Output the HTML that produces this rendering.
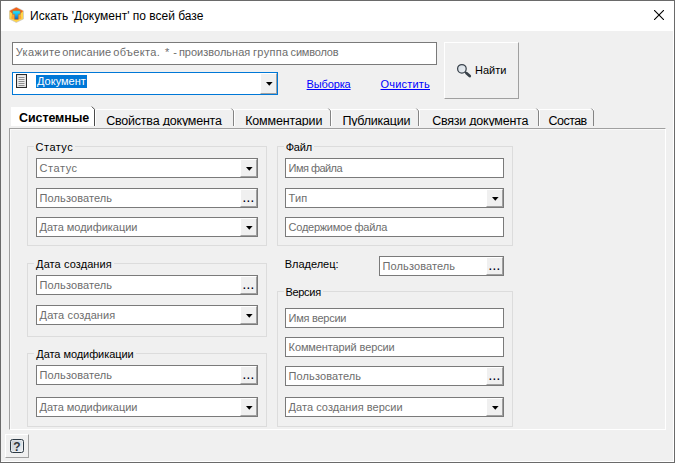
<!DOCTYPE html>
<html lang="ru">
<head>
<meta charset="utf-8">
<title>Искать 'Документ' по всей базе</title>
<style>
html,body{margin:0;padding:0;}
body{width:675px;height:463px;overflow:hidden;background:#f0f0f0;font-family:"Liberation Sans",sans-serif;font-size:11px;color:#000;position:relative;}
.abs{position:absolute;box-sizing:border-box;}
#win{left:0;top:0;width:675px;height:463px;border:1px solid #6a6a6a;background:#f0f0f0;box-shadow:inset -1px -1px 0 #fff;}
#title{left:1px;top:1px;width:673px;height:30px;background:#fff;}
#ttext{left:30px;top:9px;font-size:12px;line-height:14px;white-space:pre;}
.field{background:#fff;border:1px solid #7a7a7a;height:20px;}
.ft{line-height:14px;color:#6d6d6d;white-space:pre;}
.btn{width:17px;height:18px;background:#f0f0f0;border:1px solid;border-color:#fff #a0a0a0 #a0a0a0 #fff;}
.dots{font-size:15px;line-height:10px;white-space:pre;color:#00001a;letter-spacing:-0.17px;}
.grp{border:1px solid #dcdcdc;}
.glab{background:#f0f0f0;line-height:13px;white-space:pre;}
.tab{top:109px;height:17px;border-top:1px solid #fff;border-left:1px solid #fff;overflow:hidden;}
.tt{font-size:12.5px;line-height:14px;white-space:pre;}
a{color:#0000ff;text-decoration:underline;text-decoration-skip-ink:none;}
</style>
</head>
<body>
<div id="win" class="abs"></div>
<div id="title" class="abs"></div>
<svg class="abs" style="left:9px;top:7px" width="16" height="16" viewBox="0 0 16 16">
<defs><linearGradient id="tg" x1="0" y1="0" x2="0" y2="1"><stop offset="0" stop-color="#22f0ff"/><stop offset="0.45" stop-color="#19b4f0"/><stop offset="1" stop-color="#0a5fc8"/></linearGradient></defs>
<polygon points="7.3,0.2 14.5,3.9 14.5,11.9 7.3,15.5 0.2,11.9 0.2,3.9" fill="#ffd648" stroke="#c4c4d2" stroke-width="0.7"/>
<polygon points="7.3,0.5 14.1,4 11.5,6.5 7.3,5 3.1,6.5 0.6,4" fill="#f0601f"/>
<polygon points="3.2,6.2 7.3,5 11.4,6.2 12.4,11.5 7.3,13.2 2.2,11.5" fill="#f9a238"/>
<path d="M3.6 3.8h7.7v3.5h-2v5h-3.7v-5h-2z" fill="url(#tg)" stroke="#b8741a" stroke-width="0.5"/>
</svg>
<div id="ttext" class="abs">Искать 'Документ' по всей базе</div>
<svg class="abs" style="left:654px;top:10px" width="10" height="10" viewBox="0 0 10 10"><path d="M0 0L10 10M10 0L0 10" stroke="#000" stroke-width="1.1" fill="none"/></svg>

<div class="abs field" style="left:12px;top:42px;width:425px;height:23px;"></div>
<div class="abs ft" style="left:0;top:45px;width:440px;height:14px;"><span class="abs" style="left:15.7px;top:0;letter-spacing:0.416px;">Укажите</span> <span class="abs" style="left:62.3px;top:0;letter-spacing:0.102px;">описание</span> <span class="abs" style="left:113.2px;top:0;letter-spacing:0.375px;">объекта.</span> <span class="abs" style="left:164.9px;top:0;letter-spacing:1.919px;">*</span> <span class="abs" style="left:173.3px;top:0;letter-spacing:0.728px;">-</span> <span class="abs" style="left:178.9px;top:0;letter-spacing:0.011px;">произвольная</span> <span class="abs" style="left:253.0px;top:0;letter-spacing:0.331px;">группа</span> <span class="abs" style="left:290.6px;top:0;letter-spacing:-0.202px;">символов</span></div>
<div class="abs" style="left:12px;top:72px;width:266px;height:23px;background:#fff;border:1px solid #0078d7;"></div>
<div class="abs" style="left:36px;top:75px;height:13px;line-height:13px;background:#0078d7;color:#fff;white-space:pre;padding:0 1px;">Документ</div>
<div class="abs btn" style="left:260px;top:73px;width:17px;height:21px;"></div>
<svg class="abs" style="left:265.7px;top:81.6px" width="7" height="4" viewBox="0 0 7 4"><path d="M0 0h6.6L3.3 3.8z" fill="#000"/></svg>
<svg class="abs" style="left:16px;top:74px" width="11" height="14" viewBox="0 0 11 14"><rect x="0.5" y="0.5" width="10" height="13" fill="#ececec" stroke="#2a2a2a" stroke-width="1.1"/><path d="M2.5 3.5h6M2.5 5.5h6M2.5 7.5h6M2.5 9.5h6M2.5 11.5h6" stroke="#8e8e8e" stroke-width="1"/></svg>

<a class="abs" style="left:306.6px;top:77px;line-height:14px;letter-spacing:-0.142px;">Выборка</a>
<a class="abs" style="left:380.5px;top:77px;line-height:14px;letter-spacing:0.201px;">Очистить</a>
<div class="abs" style="left:444px;top:42px;width:75px;height:57px;background:#f0f0f0;border:1px solid;border-color:#fff #a0a0a0 #a0a0a0 #fff;"></div>
<svg class="abs" style="left:456px;top:63px" width="16" height="15" viewBox="0 0 16 15"><defs><linearGradient id="mg" x1="0" y1="0" x2="1" y2="1"><stop offset="0" stop-color="#d3dbe3"/><stop offset="1" stop-color="#eef2f5"/></linearGradient></defs><circle cx="5.9" cy="5.8" r="4.3" fill="url(#mg)" stroke="#3a434c" stroke-width="1.25"/><path d="M9 8.8L10.5 10.2" stroke="#3a434c" stroke-width="1.6"/><path d="M10.6 10.2L13.7 13" stroke="#39424a" stroke-width="2.8" stroke-linecap="round"/></svg>
<div class="abs" style="left:475px;top:63px;line-height:14px;white-space:pre;">Найти</div>

<div class="abs" style="left:9px;top:128px;width:657px;height:302px;border:1px solid #a0a0a0;border-right-color:#fff;border-bottom-color:#fff;background:#f0f0f0;box-shadow:inset 1px 1px 0 #f9f9f9;"></div>
<div class="abs" style="left:11px;top:107px;width:83px;height:19px;background:#fff;border-top-right-radius:2px;"></div>
<div class="abs tt" style="left:19px;top:111px;font-weight:bold;letter-spacing:-0.094px;">Системные</div>
<div class="abs tab" style="left:95px;width:139px;"><div class="abs tt" style="left:10.2px;top:4px;letter-spacing:-0.21px;">Свойства документа</div></div>
<div class="abs tab" style="left:234px;width:97px;"><div class="abs tt" style="left:10.2px;top:4px;letter-spacing:-0.148px;">Комментарии</div></div>
<div class="abs tab" style="left:331px;width:88px;"><div class="abs tt" style="left:10.4px;top:4px;letter-spacing:-0.225px;">Публикации</div></div>
<div class="abs tab" style="left:419px;width:120px;"><div class="abs tt" style="left:12.2px;top:4px;letter-spacing:-0.228px;">Связи документа</div></div>
<div class="abs tab" style="left:539px;width:55px;"><div class="abs tt" style="left:8.5px;top:4px;letter-spacing:-0.531px;">Состав</div></div>
<svg class="abs" style="left:0;top:0" width="675" height="130" viewBox="0 0 675 130"><path d="M231.4 108.6L233.5 110.8V126M328.4 108.6L330.5 110.8V126M416.4 108.6L418.5 110.8V126M536.4 108.6L538.5 110.8V126M591.4 108.6L593.5 110.8V126" stroke="#848484" stroke-width="1" fill="none"/><path d="M91.8 106.6L94.5 109.3V126" stroke="#4a4a4a" stroke-width="1" fill="none"/></svg>
<div class="abs grp" style="left:27px;top:146px;width:240px;height:100px;"></div>
<div class="abs glab" style="left:34px;top:141px;padding-left:1.6px;padding-right:2px;letter-spacing:0.464px;">Статус</div>
<div class="abs field" style="left:36px;top:158px;width:222px;height:20px;"></div>
<div class="abs ft" style="left:39.6px;top:161px;letter-spacing:0.544px;">Статус</div>
<div class="abs btn" style="left:240px;top:159px;"></div>
<svg class="abs" style="left:246px;top:167px" width="7" height="4" viewBox="0 0 7 4"><path d="M0 0h6.6L3.3 3.7z" fill="#000"/></svg>
<div class="abs field" style="left:36px;top:188px;width:222px;height:20px;"></div>
<div class="abs ft" style="left:39.6px;top:191px;letter-spacing:0.101px;">Пользователь</div>
<div class="abs btn" style="left:240px;top:189px;"></div>
<div class="abs dots" style="left:242.2px;top:192px;">...</div>
<div class="abs field" style="left:36px;top:217px;width:222px;height:20px;"></div>
<div class="abs ft" style="left:39.6px;top:220px;letter-spacing:-0.038px;">Дата модификации</div>
<div class="abs btn" style="left:240px;top:218px;"></div>
<svg class="abs" style="left:246px;top:226px" width="7" height="4" viewBox="0 0 7 4"><path d="M0 0h6.6L3.3 3.7z" fill="#000"/></svg>
<div class="abs grp" style="left:27px;top:263px;width:240px;height:74px;"></div>
<div class="abs glab" style="left:34px;top:258px;padding-left:2.1px;padding-right:2px;letter-spacing:0.088px;">Дата создания</div>
<div class="abs field" style="left:36px;top:275px;width:222px;height:20px;"></div>
<div class="abs ft" style="left:39.6px;top:278px;letter-spacing:0.101px;">Пользователь</div>
<div class="abs btn" style="left:240px;top:276px;"></div>
<div class="abs dots" style="left:242.2px;top:279px;">...</div>
<div class="abs field" style="left:36px;top:305px;width:222px;height:20px;"></div>
<div class="abs ft" style="left:39.6px;top:308px;letter-spacing:0.088px;">Дата создания</div>
<div class="abs btn" style="left:240px;top:306px;"></div>
<svg class="abs" style="left:246px;top:314px" width="7" height="4" viewBox="0 0 7 4"><path d="M0 0h6.6L3.3 3.7z" fill="#000"/></svg>
<div class="abs grp" style="left:27px;top:353px;width:240px;height:74px;"></div>
<div class="abs glab" style="left:34px;top:348px;padding-left:2.3px;padding-right:2px;letter-spacing:-0.065px;">Дата модификации</div>
<div class="abs field" style="left:36px;top:365px;width:222px;height:20px;"></div>
<div class="abs ft" style="left:39.6px;top:368px;letter-spacing:0.101px;">Пользователь</div>
<div class="abs btn" style="left:240px;top:366px;"></div>
<div class="abs dots" style="left:242.2px;top:369px;">...</div>
<div class="abs field" style="left:36px;top:397px;width:222px;height:20px;"></div>
<div class="abs ft" style="left:39.6px;top:400px;letter-spacing:-0.038px;">Дата модификации</div>
<div class="abs btn" style="left:240px;top:398px;"></div>
<svg class="abs" style="left:246px;top:406px" width="7" height="4" viewBox="0 0 7 4"><path d="M0 0h6.6L3.3 3.7z" fill="#000"/></svg>
<div class="abs grp" style="left:277px;top:146px;width:236px;height:100px;"></div>
<div class="abs glab" style="left:284px;top:141px;padding-left:1.7px;padding-right:2px;letter-spacing:-0.216px;">Файл</div>
<div class="abs field" style="left:285px;top:158px;width:219px;height:20px;"></div>
<div class="abs ft" style="left:288.6px;top:161px;letter-spacing:-0.543px;">Имя файла</div>
<div class="abs field" style="left:285px;top:188px;width:219px;height:20px;"></div>
<div class="abs ft" style="left:288.6px;top:191px;letter-spacing:0.078px;">Тип</div>
<div class="abs btn" style="left:486px;top:189px;"></div>
<svg class="abs" style="left:492px;top:197px" width="7" height="4" viewBox="0 0 7 4"><path d="M0 0h6.6L3.3 3.7z" fill="#000"/></svg>
<div class="abs field" style="left:285px;top:217px;width:219px;height:20px;"></div>
<div class="abs ft" style="left:288.6px;top:220px;letter-spacing:-0.259px;">Содержимое файла</div>
<div class="abs" style="left:284.7px;top:258px;line-height:13px;white-space:pre;letter-spacing:-0.017px;">Владелец:</div>
<div class="abs field" style="left:379px;top:256px;width:125px;height:20px;"></div>
<div class="abs ft" style="left:382.6px;top:259px;letter-spacing:0.101px;">Пользователь</div>
<div class="abs btn" style="left:486px;top:257px;"></div>
<div class="abs dots" style="left:488.2px;top:260px;">...</div>
<div class="abs grp" style="left:277px;top:291px;width:236px;height:136px;"></div>
<div class="abs glab" style="left:284px;top:286px;padding-left:1.5px;padding-right:2px;letter-spacing:-0.317px;">Версия</div>
<div class="abs field" style="left:285px;top:308px;width:219px;height:20px;"></div>
<div class="abs ft" style="left:288.6px;top:311px;letter-spacing:-0.259px;">Имя версии</div>
<div class="abs field" style="left:285px;top:337px;width:219px;height:20px;"></div>
<div class="abs ft" style="left:288.6px;top:340px;letter-spacing:-0.117px;">Комментарий версии</div>
<div class="abs field" style="left:285px;top:366px;width:219px;height:20px;"></div>
<div class="abs ft" style="left:288.6px;top:369px;letter-spacing:0.101px;">Пользователь</div>
<div class="abs btn" style="left:486px;top:367px;"></div>
<div class="abs dots" style="left:488.2px;top:370px;">...</div>
<div class="abs field" style="left:285px;top:397px;width:219px;height:20px;"></div>
<div class="abs ft" style="left:288.6px;top:400px;letter-spacing:0.039px;">Дата создания версии</div>
<div class="abs btn" style="left:486px;top:398px;"></div>
<svg class="abs" style="left:492px;top:406px" width="7" height="4" viewBox="0 0 7 4"><path d="M0 0h6.6L3.3 3.7z" fill="#000"/></svg>
<div class="abs" style="left:5px;top:434px;width:24px;height:24px;border:1px solid;border-color:#fff #a0a0a0 #a0a0a0 #fff;"></div>
<div class="abs" style="left:10px;top:439px;width:14px;height:14px;border:1px solid #2d3a45;border-radius:2.5px;background:linear-gradient(135deg,#c3cbd5,#eef1f4);box-shadow:inset 0 0 0 1px rgba(255,255,255,0.35);text-align:center;line-height:14px;font-weight:bold;font-size:12px;color:#30363c;">?</div>
</body>
</html>
